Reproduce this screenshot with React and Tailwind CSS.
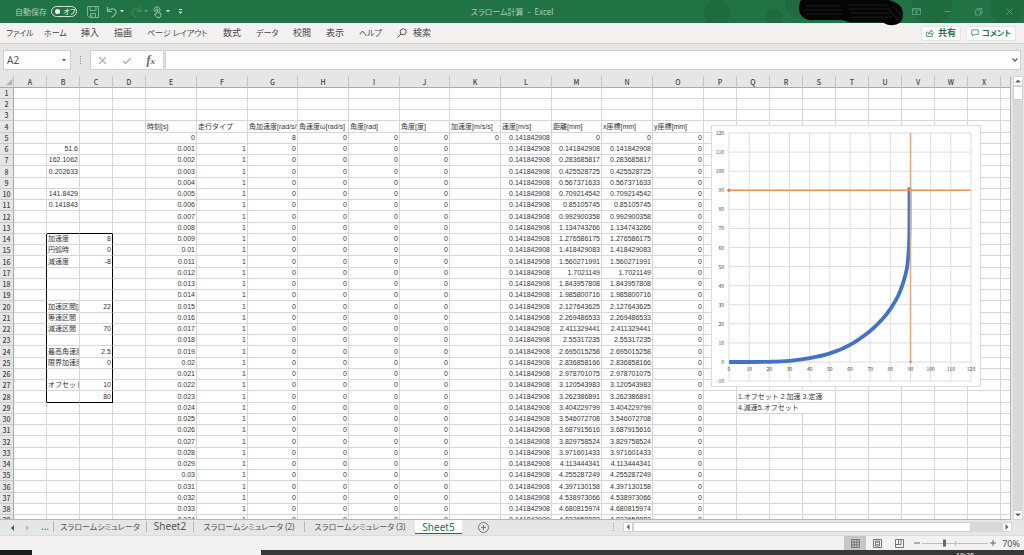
import clsx from "clsx";

const COLUMNS = [
  ["A", 33], ["B", 33], ["C", 33], ["D", 33],
  ["E", 51], ["F", 51], ["G", 50], ["H", 51], ["I", 51], ["J", 50],
  ["K", 51], ["L", 51], ["M", 50], ["N", 51], ["O", 51],
  ["P", 33], ["Q", 33], ["R", 33], ["S", 33], ["T", 33],
  ["U", 33], ["V", 33], ["W", 33], ["X", 33],
];

const ROWS = Array.from({ length: 39 }, (_, i) => i + 1);

const STEP_MM = 0.141842908311;

const FIXED_CELLS = {
  B6: "51.6",
  B7: "162.1062",
  B8: "0.202633",
  B10: "141.8429",
  B11: "0.141843",
  B14: "加速度",
  C14: "8",
  B15: "円弧時",
  C15: "0",
  B16: "減速度",
  C16: "-8",
  B20: "加速区間[度]",
  C20: "22",
  B21: "等速区間",
  B22: "減速区間",
  C22: "70",
  B24: "最高角速度",
  C24: "2.5",
  B25: "限界加速度",
  C25: "0",
  B27: "オフセット",
  C27: "10",
  C28: "80",
  E4: "時刻[s]",
  F4: "走行タイプ",
  G4: "角加速度[rad/s/s]",
  H4: "角速度ω[rad/s]",
  I4: "角度[rad]",
  J4: "角度[度]",
  K4: "加速度[m/s/s]",
  L4: "速度[m/s]",
  M4: "距離[mm]",
  N4: "x座標[mm]",
  O4: "y座標[mm]",
  G5: "8",
  K5: "0",
  Q28: "1.オフセット 2.加速 3.定速",
  Q29: "4.減速5.オフセット",
};

const RIBBON_TABS = [
  { label: "ファイル", width: "w-[38px]", kana: true },
  { label: "ホーム", width: "w-[37px]", kana: true },
  { label: "挿入", width: "w-[33px]" },
  { label: "描画", width: "w-[33px]" },
  { label: "ページ レイアウト", width: "w-[76px]", kana: true },
  { label: "数式", width: "w-[33px]" },
  { label: "データ", width: "w-[37px]", kana: true },
  { label: "校閲", width: "w-[33px]" },
  { label: "表示", width: "w-[33px]" },
  { label: "ヘルプ", width: "w-[38px]", kana: true },
];

const SHEETS = [
  { label: "スラロームシミュレータ", width: "w-[93px]" },
  { label: "Sheet2", width: "w-[47px]" },
  { label: "スラロームシミュレータ (2)", width: "w-[111px]" },
  { label: "スラロームシミュレータ (3)", width: "w-[111px]" },
  { label: "Sheet5", width: "w-[47px]", active: true },
];

function cellValue(col, row) {
  const fixed = FIXED_CELLS[col + row];
  if (fixed !== undefined) return fixed;
  if (row < 5) return "";

  const n = row - 5;
  if (col === "E") return String(n / 1000);
  if (col === "F") return n > 0 ? "1" : "";
  if ("GHIJO".includes(col)) return "0";
  if (col === "L") return "0.141842908";
  if (col === "M" || col === "N") return String(Number((n * STEP_MM).toFixed(9)));
  return "";
}

function cellBorder(col, row) {
  const boxed = row >= 14 && row <= 28;
  return clsx(
    "border-r border-b",
    boxed && (col === "A" || col === "C") ? "border-r-black" : "border-r-[#d6d6d6]",
    (row === 13 || row === 28) && (col === "B" || col === "C")
      ? "border-b-black"
      : "border-b-[#d6d6d6]",
  );
}

function Cell({ col, row }) {
  const value = cellValue(col, row);
  const isNumber = value !== "" && !Number.isNaN(Number(value));
  const isNote = col === "Q" && value !== "";

  return (
    <td
      colSpan={isNote ? 3 : 1}
      className={clsx(
        "overflow-hidden p-0 font-['Liberation_Sans','Noto_Sans_CJK_JP',sans-serif] text-[7px] leading-[10px] whitespace-nowrap",
        cellBorder(col, row),
        isNumber ? "pr-px text-right" : "pl-px text-left",
      )}
    >
      {value}
    </td>
  );
}

function Sheet() {
  return (
    <table className="w-full table-fixed border-separate border-spacing-0 bg-white text-[#333]">
      <colgroup>
        <col style={{ width: 14 }} />
        {COLUMNS.map(([name, width]) => (
          <col key={name} style={{ width }} />
        ))}
        <col />
      </colgroup>
      <thead>
        <tr className="h-3 bg-[#e6e6e6]">
          <th className="border-r border-b border-r-[#c4c4c4] border-b-[#a8a8a8] p-0">
            <svg viewBox="0 0 10 10" className="ml-auto h-2 w-2 fill-[#b4b4b4]" aria-hidden="true">
              <path d="M9 1v8H1z" />
            </svg>
          </th>
          {COLUMNS.map(([name]) => (
            <th
              key={name}
              scope="col"
              className="border-r border-b border-r-[#c4c4c4] border-b-[#a8a8a8] p-0 text-[7px] leading-[10px] font-medium text-[#444]"
            >
              {name}
            </th>
          ))}
          <th className="border-b border-b-[#a8a8a8] p-0" />
        </tr>
      </thead>
      <tbody>
        {ROWS.map((row) => (
          <tr key={row} className={row % 4 === 0 ? "h-3" : "h-[11px]"}>
            <th
              scope="row"
              className="border-r border-b border-r-[#a8a8a8] border-b-[#c9c9c9] bg-[#e6e6e6] p-0 text-center text-[7px] leading-[10px] font-medium text-[#444]"
            >
              {row}
            </th>
            {COLUMNS.filter(
              ([col]) => !((row === 28 || row === 29) && (col === "R" || col === "S")),
            ).map(([col]) => (
              <Cell key={col} col={col} row={row} />
            ))}
            <td className="border-b border-b-[#d6d6d6] p-0" />
          </tr>
        ))}
      </tbody>
    </table>
  );
}

const CURVE = [
  [0, 0], [10, 0], [20, 0.1], [30, 0.6], [40, 2], [50, 4.5], [60, 9],
  [70, 16.3], [76, 22.4], [80, 27.7], [84, 35], [86.5, 42], [88.2, 49],
  [89, 57], [89.4, 65], [89.5, 75], [89.5, 91.5],
];

const px = (x) => 17 + (x * 242) / 120;
const py = (y) => 236 - (y * 229) / 120;

// Catmull-Rom spline through the sampled points
function curvePath(points) {
  const p = points.map(([x, y]) => [px(x), py(y)]);
  let d = `M${p[0][0]} ${p[0][1]}`;
  for (let i = 0; i < p.length - 1; i++) {
    const a = p[Math.max(i - 1, 0)];
    const b = p[i];
    const c = p[i + 1];
    const e = p[Math.min(i + 2, p.length - 1)];
    d += `C${b[0] + (c[0] - a[0]) / 6} ${b[1] + (c[1] - a[1]) / 6} ${c[0] - (e[0] - b[0]) / 6} ${c[1] - (e[1] - b[1]) / 6} ${c[0]} ${c[1]}`;
  }
  return d;
}

function Chart() {
  const xTicks = Array.from({ length: 13 }, (_, i) => i * 10);
  const yTicks = Array.from({ length: 14 }, (_, i) => i * 10 - 10);

  return (
    <svg
      viewBox="0 0 268 260"
      role="img"
      aria-label="スラローム軌跡"
      className="absolute top-[49px] left-[711px] h-[262px] w-[270px] border border-[#dcdcdc] bg-white"
    >
      <g stroke="#dedede" strokeWidth="1">
        {xTicks.map((x) => (
          <line key={x} x1={px(x)} x2={px(x)} y1={py(120)} y2={py(-10)} />
        ))}
        {yTicks.map((y) => (
          <line key={y} x1={px(0)} x2={px(120)} y1={py(y)} y2={py(y)} />
        ))}
      </g>
      <g fill="#444" fontSize="5">
        {yTicks.map((y) => (
          <text key={y} x="12" y={py(y) + 2} textAnchor="end">{y}</text>
        ))}
        {xTicks.map((x) => (
          <text key={x} x={px(x)} y={py(0) + 9} textAnchor="middle">{x}</text>
        ))}
      </g>
      <path d={curvePath(CURVE)} fill="none" stroke="#4472c4" strokeWidth="3.8" />
      <line x1={px(90)} x2={px(90)} y1={py(0)} y2={py(120)} stroke="#f2a36f" strokeWidth="1.5" />
      <line x1={px(0)} x2={px(120)} y1={py(90)} y2={py(90)} stroke="#f0935a" strokeWidth="1.5" />
      <circle cx={px(0)} cy={py(90)} r="1.7" fill="#ed7d31" />
      <circle cx={px(90)} cy={py(0)} r="1.4" fill="#a5a5a5" />
    </svg>
  );
}

function TitleBar() {
  return (
    <header className="relative flex h-[23px] shrink-0 items-center justify-center bg-[#217346] text-[8px] text-[#a9cdb9]">
      <svg
        viewBox="0 0 400 23"
        className="absolute top-0 right-0 h-[23px] w-[400px] fill-[#1e6b40]"
        aria-hidden="true"
      >
        <circle cx="93" cy="13" r="13" />
        <circle cx="150" cy="17" r="8" />
        <circle cx="178" cy="2" r="17" />
        <circle cx="308" cy="4" r="20" />
        <circle cx="383" cy="8" r="17" />
      </svg>
      <div className="absolute left-[15px] flex h-[23px] items-center">
        <label htmlFor="autosave">自動保存</label>
        <span className="relative ml-1 flex h-[11px] w-[26px] items-center rounded-full border border-[#d3e5da] text-[7px] text-white">
          <input
            id="autosave"
            type="checkbox"
            role="switch"
            className="absolute inset-0 appearance-none"
          />
          <span className="ml-[3px] h-[5px] w-[5px] rounded-full bg-white" />
          <span className="ml-[3px] leading-[9px] [font-feature-settings:'palt']">オフ</span>
        </span>
        <button type="button" aria-label="保存" className="ml-2.5">
          <svg viewBox="0 0 12 12" className="h-3 w-3 fill-none stroke-[#7fb596]">
            <path d="M.5.5h11v11h-9l-2-2zM3 .5v4h6v-4M3.500 11.500v-4h5v4M5 9v2" />
          </svg>
        </button>
        <button type="button" aria-label="元に戻す" className="ml-[7px] flex items-center">
          <svg viewBox="0 0 12 12" className="h-3 w-3 fill-none stroke-[#8bbda1]" strokeWidth="1.2">
            <path d="M1.500 1v4.500H6M1.500 5.500C4 1.500 10.500 2 10 6.500c-.2 2-2.500 3.500-4.500 5" />
          </svg>
          <Caret className="ml-0.5 fill-[#c6dece]" />
        </button>
        <button type="button" aria-label="やり直し" className="ml-1.5 flex items-center">
          <svg viewBox="0 0 12 12" className="h-3 w-3 fill-none stroke-[#418760]" strokeWidth="1.2">
            <path d="M10.500 1v4.500H6M10.500 5.500C8 1.500 1.500 2 2 6.500c.2 2 2.500 3.500 4.500 5" />
          </svg>
          <Caret className="ml-0.5 fill-[#5f9c79]" />
        </button>
        <button type="button" aria-label="タッチ/マウス モードの切り替え" className="ml-1 flex items-center">
          <svg viewBox="0 0 12 12" className="h-3 w-3 fill-none stroke-[#9cc7af]">
            <path d="M2.500 5.500a3 3 0 1 1 5 0M4.200 8V3.500c0-1 1.600-1 1.600 0v3l3 .8v2.200L8 11.500H5L2.500 8.500z" />
          </svg>
          <Caret className="ml-0.5 fill-[#c6dece]" />
        </button>
        <button type="button" aria-label="クイック アクセス ツール バーのカスタマイズ" className="ml-2">
          <svg viewBox="0 0 5 6" className="h-1.5 w-[5px] fill-[#c6dece]">
            <path d="M1 0h3v1H1zM.5 2.500h4L2.500 5z" />
          </svg>
        </button>
      </div>
      <h1 className="[font-feature-settings:'palt'] whitespace-pre">スラローム計算  -  Excel</h1>
      <div className="absolute right-2.5 flex h-[23px] items-center gap-[22px]">
        {[
          ["リボンの表示オプション", "M.5 1.500h8v6h-8zM.5 3h8M4.500 7V4.200M3.200 5.400l1.300-1.200 1.300 1.200"],
          ["最小化", "M1.500 4.500h6"],
          ["元に戻す (縮小)", "M1.500 3h5v5h-5zM3 3V1.500h5v5H6.500"],
          ["閉じる", "M1.500 1.500l6 6M7.500 1.500l-6 6"],
        ].map(([label, d]) => (
          <button key={label} type="button" aria-label={label}>
            <svg viewBox="0 0 9 9" className="h-[9px] w-[9px] fill-none stroke-[#5c9a77]">
              <path d={d} />
            </svg>
          </button>
        ))}
      </div>
      <svg
        viewBox="0 0 110 27"
        className="absolute top-0 right-[117px] z-10 h-[27px] w-[110px]"
        aria-hidden="true"
      >
        <path
          d="M4 0C1 6 1 14 7 18c4 3 9 2 15 2h22c4 0 6 2.500 10 2.500h32c4 3 12 4 17 0 4-4 4-12 0-17C100 3 96 1 92 0z"
          fill="#050505"
        />
        <path
          d="M8 6h35M7 10h38M10 14h36M50 5h40M52 9h40M54 13h40M55 17h40M96 6l10 12M92 9l10 13"
          stroke="#262626"
          strokeWidth="0.7"
        />
      </svg>
    </header>
  );
}

function Caret({ className }) {
  return (
    <svg viewBox="0 0 4 3" className={clsx("h-[3px] w-1", className)} aria-hidden="true">
      <path d="M0 0h4L2 2.500z" />
    </svg>
  );
}

function Ribbon() {
  return (
    <nav className="flex h-[21px] shrink-0 items-center border-b border-[#cfcfcf] bg-[#f3f2f1] pr-2 pl-1.5 text-[9px] text-[#444]">
      {RIBBON_TABS.map((tab) => (
        <button
          key={tab.label}
          type="button"
          className={clsx(
            "shrink-0 text-left leading-[18px] whitespace-nowrap [font-feature-settings:'palt']",
            tab.width,
            tab.kana && "text-[8px]",
          )}
        >
          {tab.label}
        </button>
      ))}
      <button type="button" className="flex items-center gap-1.5">
        <svg viewBox="0 0 10 10" className="h-2.5 w-2.5 fill-none stroke-[#555]">
          <circle cx="6.200" cy="3.800" r="3" />
          <path d="M4 6L.5 9.500" />
        </svg>
        検索
      </button>
      <div className="ml-auto flex gap-[5px] font-bold text-[#217346]">
        <button
          type="button"
          className="flex h-[15px] w-10 items-center justify-center gap-1 rounded-xs border border-[#e6e4e2] bg-white"
        >
          <svg viewBox="0 0 9 9" className="h-2 w-2 fill-none stroke-[#4c8f6b]">
            <path d="M3 3.500H.8v5h6.400V6M2.800 6c.2-2 1.200-3 3-3V1l2.700 3-2.700 2.500V4.800c-1.300 0-2.200.2-3 1.200z" />
          </svg>
          共有
        </button>
        <button
          type="button"
          className="flex h-[15px] w-[50px] items-center justify-center gap-[3px] rounded-xs border border-[#e6e4e2] bg-white text-[8px] whitespace-nowrap [font-feature-settings:'palt']"
        >
          <svg viewBox="0 0 9 9" className="h-2 w-2 shrink-0 fill-none stroke-[#4c8f6b]">
            <path d="M.8 1h7.400v5H4L2 8V6H.8z" />
          </svg>
          コメント
        </button>
      </div>
    </nav>
  );
}

function FormulaBar() {
  return (
    <div className="flex h-8 shrink-0 items-center bg-[#e6e6e6] pr-[3px] pl-[3px]">
      <div className="flex h-5 w-[68px] items-center border border-[#d0d0d0] bg-white pr-1">
        <input
          aria-label="名前ボックス"
          defaultValue="A2"
          className="w-full min-w-0 pl-[3px] text-[10px] leading-4 text-[#555] outline-none"
        />
        <Caret className="shrink-0 fill-[#555]" />
      </div>
      <svg viewBox="0 0 3 8" className="mx-2 h-2 w-[3px] fill-[#888]" aria-hidden="true">
        <path d="M1 0h1v1H1zM1 2.300h1v1H1zM1 4.600h1v1H1zM1 7h1v1H1z" />
      </svg>
      <div className="mr-px flex h-5 w-[74px] shrink-0 items-center justify-between border border-[#d0d0d0] bg-white pr-2 pl-[7px]">
        <button type="button" aria-label="キャンセル">
          <svg viewBox="0 0 9 9" className="h-[9px] w-[9px] fill-none stroke-[#b0b0b0]" strokeWidth="1.2">
            <path d="M1 1l7 7M8 1L1 8" />
          </svg>
        </button>
        <button type="button" aria-label="入力">
          <svg viewBox="0 0 10 9" className="h-[9px] w-2.5 fill-none stroke-[#b0b0b0]" strokeWidth="1.4">
            <path d="M1 5l2.500 2.500L9 2" />
          </svg>
        </button>
        <button
          type="button"
          aria-label="関数の挿入"
          className="font-['Liberation_Serif',serif] text-[12px] leading-4 font-bold text-[#666] italic"
        >
          f<span className="text-[9px]">x</span>
        </button>
      </div>
      <div className="flex h-5 min-w-0 flex-1 items-center border border-[#d0d0d0] bg-white pr-0.5">
        <input aria-label="数式バー" className="w-full min-w-0 text-[10px] leading-4 outline-none" />
        <svg viewBox="0 0 6 4" className="h-1 w-1.5 shrink-0 fill-none stroke-[#666]" strokeWidth="1.4">
          <path d="M.5.5L3 3 5.500.5" />
        </svg>
      </div>
    </div>
  );
}

function ScrollButton({ label, d }) {
  return (
    <button
      type="button"
      aria-label={label}
      className="flex h-2.5 w-2.5 shrink-0 items-center justify-center border border-[#d4d4d4] bg-white"
    >
      <svg viewBox="0 0 6 6" className="h-1.5 w-1.5 fill-[#666]">
        <path d={d} />
      </svg>
    </button>
  );
}

function SheetTabs() {
  return (
    <div className="flex h-[15px] shrink-0 items-start bg-[#e6e6e6] pr-3 text-[10px] text-[#555]">
      <div className="flex h-[15px] w-[53px] shrink-0 items-center justify-end gap-3 pr-1 text-[#217346]">
        <button type="button" aria-label="前のシート">
          <svg viewBox="0 0 3 6" className="h-1.5 w-[3px] fill-[#217346]"><path d="M3 0v6L0 3z" /></svg>
        </button>
        <button type="button" aria-label="次のシート">
          <svg viewBox="0 0 3 6" className="h-1.5 w-[3px] fill-[#bbb]"><path d="M0 0v6l3-3z" /></svg>
        </button>
        <button type="button" className="pb-1 leading-3">...</button>
      </div>
      {SHEETS.map((sheet) => (
        <button
          key={sheet.label}
          type="button"
          className={clsx(
            "shrink-0 text-center whitespace-nowrap [font-feature-settings:'palt']",
            sheet.width,
            sheet.active
              ? "h-3.5 border-b border-[#217346] bg-white leading-[12px] text-[#217346]"
              : "mt-px h-[11px] border-l border-[#b8b8b8] leading-[11px]",
            sheet.label.length > 8 ? "text-[8px]" : "text-[10px]",
          )}
        >
          {sheet.label}
        </button>
      ))}
      <button type="button" aria-label="新しいシート" className="mt-0.5 ml-4">
        <svg viewBox="0 0 11 11" className="h-[11px] w-[11px] fill-none stroke-[#777]">
          <circle cx="5.500" cy="5.500" r="5" />
          <path d="M5.500 3v5M3 5.500h5" />
        </svg>
      </button>
      <div className="mt-0.5 ml-auto flex w-[400px] items-center">
        <svg viewBox="0 0 3 8" className="mr-2 h-2 w-[3px] fill-[#999]" aria-hidden="true">
          <path d="M1 0h1v1H1zM1 2.300h1v1H1zM1 4.600h1v1H1zM1 7h1v1H1z" />
        </svg>
        <ScrollButton label="左へスクロール" d="M4.500 0v6l-3-3z" />
        <div className="flex h-2.5 flex-1 bg-[#d9d9d9]">
          <div className="h-2.5 w-11/12 border border-[#d0d0d0] bg-white" />
        </div>
        <ScrollButton label="右へスクロール" d="M1.500 0v6l3-3z" />
      </div>
    </div>
  );
}

function StatusBar() {
  return (
    <footer className="flex h-[15px] shrink-0 items-center justify-end border-t border-[#dcdcdc] bg-[#f3f2f1] pr-1 text-[9px] text-[#555]">
      {[
        ["標準", "M.5.5h8v8h-8zM3.200.5v8M5.800.5v8M.5 3.200h8M.5 5.800h8", true],
        ["ページ レイアウト", "M.5.5h8v8h-8zM2.500 2v5h4V2zM3.500 3.500h2M3.500 5.500h2"],
        ["改ページ プレビュー", "M.5.5h8v8h-8zM3.500.5v5M.5 5.500h5.500v-5"],
      ].map(([label, d, active]) => (
        <button
          key={label}
          type="button"
          aria-label={label}
          className={clsx(
            "flex h-3.5 w-[22px] items-center justify-center",
            active && "bg-[#c8c6c4]",
          )}
        >
          <svg viewBox="0 0 9 9" className="h-[9px] w-[9px] fill-none stroke-[#777]">
            <path d={d} />
          </svg>
        </button>
      ))}
      <button type="button" aria-label="縮小" className="ml-1 w-2">
        <svg viewBox="0 0 6 6" className="h-1.5 w-1.5 stroke-[#666]"><path d="M0 3h6" /></svg>
      </button>
      <div className="relative h-3 w-[66px]">
        <input
          type="range"
          aria-label="ズーム"
          min="10"
          max="400"
          defaultValue="70"
          className="absolute inset-0 w-full opacity-0"
        />
        <svg viewBox="0 0 66 12" className="h-3 w-[66px]" aria-hidden="true">
          <path d="M0 6.500h66M33.500 4v5" stroke="#bdbdbd" />
          <path d="M21 2.500h3v7h-3z" fill="#666" />
        </svg>
      </div>
      <button type="button" aria-label="拡大" className="mr-1.5 ml-0.5">
        <svg viewBox="0 0 6 6" className="h-1.5 w-1.5 stroke-[#666]"><path d="M0 3h6M3 0v6" /></svg>
      </button>
      <button type="button" className="leading-[13px]">70%</button>
    </footer>
  );
}

export default function App() {
  return (
    <div className="flex h-screen flex-col overflow-hidden bg-[#e6e6e6] font-['Noto_Sans','Noto_Sans_CJK_JP',sans-serif]">
      <TitleBar />
      <Ribbon />
      <FormulaBar />
      <main className="flex min-h-0 flex-1">
        <div className="relative min-w-0 flex-1 overflow-hidden border-r border-b border-[#b5b5b5] font-['Noto_Sans_CJK_JP',sans-serif]">
          <Sheet />
          <Chart />
        </div>
        <div className="flex w-[13px] flex-col items-center">
          <ScrollButton label="上へスクロール" d="M0 4.500h6l-3-3z" />
          <div className="w-2.5 flex-1 bg-[#d9d9d9]">
            <div className="h-3.5 border border-[#d0d0d0] bg-white" />
          </div>
          <ScrollButton label="下へスクロール" d="M0 1.500h6l-3 3z" />
        </div>
      </main>
      <SheetTabs />
      <StatusBar />
      <div className="flex h-[5px] shrink-0 overflow-hidden bg-[#383838]">
        <div className="w-8 bg-[#1c1c1c]" />
        <div className="w-[229px] bg-[#f2f2f2]" />
        <time className="mr-[50px] ml-auto pt-0.5 text-[7px] leading-[8px] text-white">18:38</time>
      </div>
    </div>
  );
}
